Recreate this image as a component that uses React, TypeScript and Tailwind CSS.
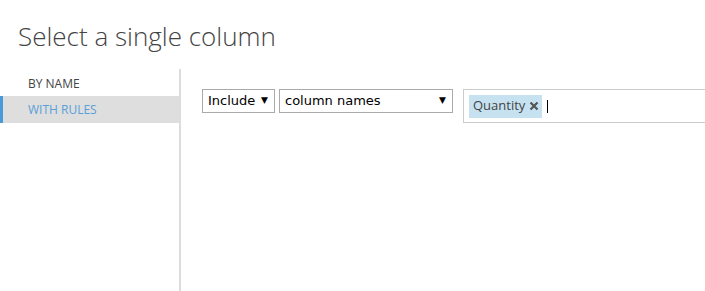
export default function App() {
  return (
    <div className="w-[705px] h-[291px] bg-white overflow-hidden flex flex-col">
      <div className="h-[69px] shrink-0 pl-[18px] pt-[16px]">
        <h1 className="text-[26px] leading-[40px] font-light text-[#444]" style={{ fontFamily: '"Open Sans", sans-serif' }}>
          Select a single column
        </h1>
      </div>
      <div className="flex flex-1 min-w-0">
        <div className="w-[181px] shrink-0 border-r-2 border-[#dcdcdc] pt-[2px]" style={{ fontFamily: '"Open Sans", sans-serif' }}>
          <div className="h-[25px] pl-[28px] flex items-center text-[12px] font-medium text-[#444]">BY NAME</div>
          <div className="h-[27px] flex items-center text-[12px] font-medium text-[#5aa0d8] bg-[#dedede] border-l-[3px] border-[#4a9ad8]" style={{ paddingLeft: 25 }}>
            WITH RULES
          </div>
        </div>
        <div className="flex items-start shrink-0 pt-[20px] pl-[21px]">
          <div className="flex items-center gap-[4px]" style={{ fontFamily: '"DejaVu Sans", Verdana, sans-serif' }}>
            <div className="h-[24px] w-[73px] border border-[#aaa] flex items-center justify-between pl-[5px] pr-[6px] text-[13px] text-black">
              <span>Include</span>
              <span className="text-[9px]">▼</span>
            </div>
            <div className="h-[24px] w-[174px] border border-[#aaa] flex items-center justify-between pl-[5px] pr-[6px] text-[13px] text-black">
              <span>column names</span>
              <span className="text-[9px]">▼</span>
            </div>
          </div>
          <div className="ml-[10px] h-[34px] w-[300px] shrink-0 border border-[#ccc] flex items-center pl-[5px]">
            <div className="h-[23px] bg-[#c6e2f0] flex items-center pl-[4px] pr-[3px] text-[13px] text-[#444]" style={{ fontFamily: '"Open Sans", sans-serif' }}>
              <span>Quantity</span>
              <svg width="10" height="10" viewBox="0 0 10 10" className="ml-[4px]">
                <path d="M1.5 1.5 L8.5 8.5 M8.5 1.5 L1.5 8.5" stroke="#555" strokeWidth="2.2" strokeLinecap="butt" />
              </svg>
            </div>
            <div className="ml-[5px] w-[1px] h-[13px] bg-black" />
          </div>
        </div>
      </div>
    </div>
  );
}
